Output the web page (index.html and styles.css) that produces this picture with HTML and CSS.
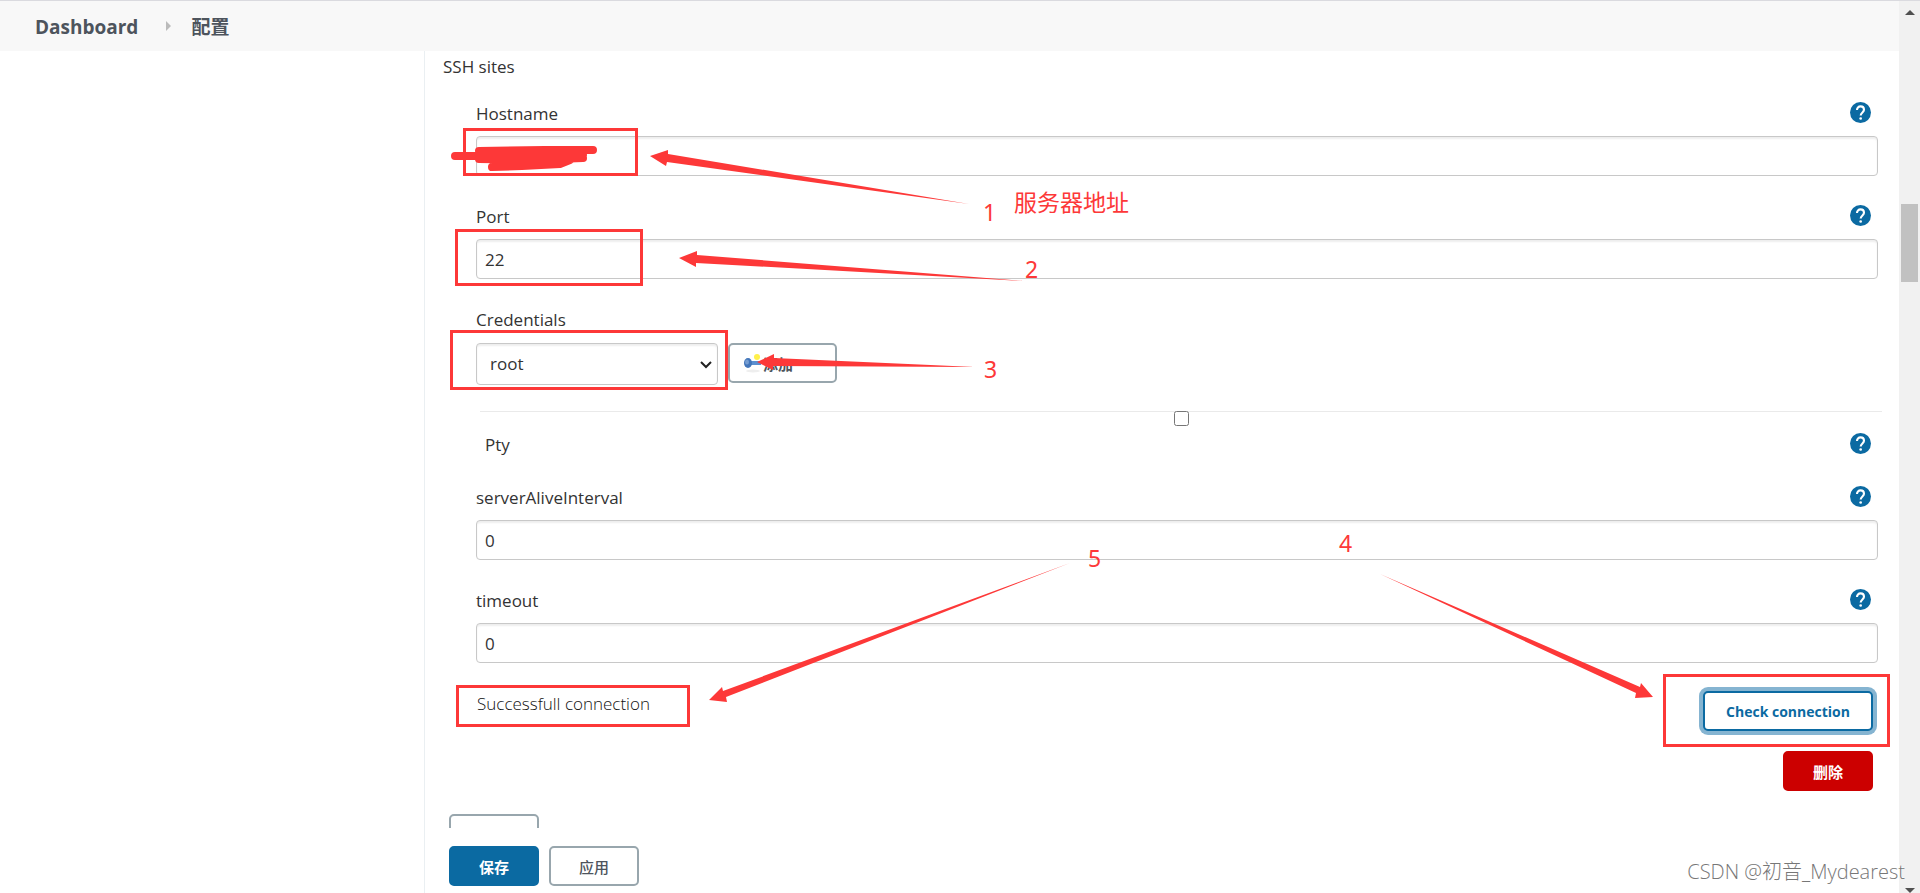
FILE: index.html
```html
<!DOCTYPE html>
<html lang="zh-CN">
<head>
  <meta charset="UTF-8">
  <title>配置 [Jenkins]</title>
  <link rel="stylesheet" href="styles.css">
</head>
<body>
  <svg class="symbols" aria-hidden="true">
    <symbol id="help" viewBox="0 0 24 24">
      <path fill="#0b6aa2" d="M12 0a12 12 0 1 0 0 24 12 12 0 0 0 0-24z"/>
      <path fill="none" stroke="#fff" stroke-width="2.4" d="M8 9.2c0-2.4 1.700-4.200 4-4.200s4 1.700 4 3.900c0 2.900-3.800 3.200-3.800 6.600"/>
      <circle cx="12.200" cy="18.800" r="1.500" fill="#fff"/>
    </symbol>
  </svg>

  <div class="window">
    <div class="page">
      <nav class="breadcrumbs">
        <a href="#">Dashboard</a>
        <span class="separator"></span>
        <a href="#">配置</a>
      </nav>

      <div class="main">
        <aside class="side-panel"></aside>
        <form class="config">
          <div class="config-body">
            <h2 class="section-title">SSH sites</h2>

            <div class="site">
              <div class="field">
                <div class="field-head">
                  <label for="hostname">Hostname</label>
                  <a class="help" href="#" aria-label="Help"><svg><use href="#help"/></svg></a>
                </div>
                <input class="text-input" id="hostname" type="text">
              </div>

              <div class="field">
                <div class="field-head">
                  <label for="port">Port</label>
                  <a class="help" href="#" aria-label="Help"><svg><use href="#help"/></svg></a>
                </div>
                <input class="text-input" id="port" type="text" value="22">
              </div>

              <div class="field">
                <div class="field-head">
                  <label for="credentials">Credentials</label>
                </div>
                <div class="credentials">
                  <div class="select">
                    <select id="credentials">
                      <option>root</option>
                    </select>
                    <svg viewBox="0 0 12 8"><path d="M1 1l5 5 5-5" fill="none" stroke="#222" stroke-width="2"/></svg>
                  </div>
                  <button class="button add" type="button">
                    <svg viewBox="0 0 20 20">
                      <ellipse cx="10" cy="18" rx="7" ry="1.500" fill="#eee"/>
                      <circle cx="14" cy="4" r="3" fill="#fff04a"/>
                      <path d="M5 8h13v4H5z" fill="#5b8fd0"/>
                      <ellipse cx="5" cy="10" rx="4" ry="5" fill="#4376ba"/>
                      <ellipse cx="4" cy="9" rx="2" ry="2.500" fill="#769ed2"/>
                    </svg>
                    添加
                  </button>
                </div>
              </div>

              <div class="pty">
                <input id="pty" type="checkbox">
                <div class="field-head">
                  <label for="pty">Pty</label>
                  <a class="help" href="#" aria-label="Help"><svg><use href="#help"/></svg></a>
                </div>
              </div>

              <div class="field">
                <div class="field-head">
                  <label for="interval">serverAliveInterval</label>
                  <a class="help" href="#" aria-label="Help"><svg><use href="#help"/></svg></a>
                </div>
                <input class="text-input" id="interval" type="text" value="0">
              </div>

              <div class="field">
                <div class="field-head">
                  <label for="timeout">timeout</label>
                  <a class="help" href="#" aria-label="Help"><svg><use href="#help"/></svg></a>
                </div>
                <input class="text-input" id="timeout" type="text" value="0">
              </div>

              <div class="validate">
                <span>Successfull connection</span>
                <button class="button check" type="button">Check connection</button>
              </div>
              <div class="remove">
                <button class="button danger" type="button">删除</button>
              </div>
            </div>

            <button class="button add-site" type="button" aria-label="新增"></button>
          </div>

          <div class="bottom-bar">
            <button class="button primary" type="submit">保存</button>
            <button class="button apply" type="button">应用</button>
          </div>
        </form>
      </div>
    </div>

    <div class="scrollbar">
      <svg viewBox="0 0 10 5"><path d="M0 5l5-5 5 5z"/></svg>
      <div class="track"><div class="thumb"></div></div>
      <svg viewBox="0 0 10 5"><path d="M0 0l5 5 5-5z"/></svg>
    </div>
  </div>

  <!-- hand-drawn notes on top of the form -->
  <svg class="notes">
    <g class="boxes">
      <rect x="464" y="129" width="172" height="45"/>
      <rect x="456" y="230" width="185" height="54"/>
      <rect x="451" y="331" width="275" height="57"/>
      <rect x="457" y="686" width="231" height="39"/>
      <rect x="1664" y="675" width="224" height="70"/>
    </g>
    <g class="scribble">
      <path d="M455 156H490M479 151L545 150L593 150M479 159L530 160L583 158M480 155H583M492 167L522 166L560 164L570 160"/>
    </g>
    <g class="arrows">
      <path d="M650 156L668 150V154L969 204L667 162L666 166z"/>
      <path d="M679 258L697 251V255L1024 281L696 263V267z"/>
      <path d="M757 362L774 354V358L975 367L773 366V370z"/>
      <path d="M1653 697L1641 683L1640 687L1380 574L1636 693L1635 698z"/>
      <path d="M709 700L722 687L723 691L1070 563L726 697L727 702z"/>
    </g>
    <g class="labels">
      <text x="983" y="221">1</text>
      <text x="1014" y="211">服务器地址</text>
      <text x="1025" y="278">2</text>
      <text x="984" y="378">3</text>
      <text x="1339" y="552">4</text>
      <text x="1088" y="567">5</text>
    </g>
  </svg>
  <div class="watermark">CSDN @初音_Mydearest</div>
</body>
</html>
```

FILE: styles.css
```css
:root {
  --text: #333;
  --blue: #0b6aa2;
  --red: #fd3838;
  --border: #c8c8c8;
}

* {
  box-sizing: border-box;
}

body {
  margin: 0;
  height: 100vh;
  overflow: hidden;
  position: relative;
  background: #fff;
  color: var(--text);
  font-family: "Open Sans", "Noto Sans CJK SC", sans-serif;
  font-size: 17px;
  line-height: 24px;
}

.symbols {
  display: none;
}

.window {
  display: flex;
  height: 100%;
  border-top: 1px solid #dadadf;
}

.page {
  flex: 1;
  display: flex;
  flex-direction: column;
  min-width: 0;
}

.breadcrumbs {
  display: flex;
  align-items: center;
  height: 50px;
  padding: 2px 0 0 35px;
  background: #f8f8f8;
  font-size: 19px;
  font-weight: 700;
}

.breadcrumbs a {
  color: #4d545d;
  text-decoration: none;
}

.separator {
  margin: 0 20px 2px 28px;
  border: 5px solid transparent;
  border-left-color: #bbb;
  border-right: 0;
}

.main {
  flex: 1;
  display: flex;
  min-height: 0;
}

.side-panel {
  width: 425px;
  border-right: 1px solid #eaeff2;
}

.config {
  flex: 1;
  display: flex;
  flex-direction: column;
  min-width: 0;
}

.config-body {
  flex: 1;
  min-height: 0;
  overflow: hidden;
  padding: 4px 21px 0 18px;
}

.section-title {
  margin: 0 0 23px;
  font-size: 17px;
  font-weight: 400;
}

.site {
  padding-left: 33px;
}

.field {
  margin-bottom: 29px;
}

.field-head {
  display: flex;
  justify-content: space-between;
  height: 24px;
  padding-right: 7px;
  font-weight: 500;
}

.field .field-head {
  margin-bottom: 10px;
}

.help,
.help svg {
  display: block;
  width: 21px;
  height: 21px;
}

.text-input,
select {
  display: block;
  width: 100%;
  height: 40px;
  padding: 0 8px;
  border: 1px solid var(--border);
  border-radius: 4px;
  background: #fff;
  box-shadow: inset 0 2px 2px rgba(0, 0, 0, 0.07);
  color: var(--text);
  font: inherit;
}

.credentials {
  display: flex;
  gap: 10px;
  padding-top: 1px;
}

.select {
  position: relative;
  width: 242px;
}

.select select {
  height: 42px;
  padding-left: 13px;
  appearance: none;
}

.select svg {
  position: absolute;
  right: 6px;
  top: 18px;
  width: 12px;
  height: 8px;
}

.button {
  min-width: 90px;
  height: 40px;
  padding: 0 22px;
  border: 2px solid #98a6ad;
  border-radius: 5px;
  background: #fff;
  color: #4d545d;
  font-family: inherit;
  font-size: 15px;
  font-weight: 700;
}

.add {
  display: flex;
  align-items: center;
  width: 109px;
  padding: 0 13px;
}

.add svg {
  width: 20px;
  height: 20px;
}

.pty {
  margin: -3px -4px 29px 4px;
  border-top: 1px solid #eaeaea;
}

.pty input {
  display: block;
  width: 15px;
  height: 15px;
  margin: -1px auto 7px;
}

.pty .field-head {
  padding: 0 11px 0 5px;
}

.validate {
  display: flex;
  justify-content: space-between;
  align-items: flex-start;
  margin-top: -1px;
  padding: 0 5px 0 1px;
  color: #111;
  font-weight: 300;
  line-height: 26px;
}

.check {
  width: 170px;
  border-color: var(--blue);
  box-shadow: 0 0 0 4px #85b4d1;
  color: var(--blue);
  font-size: 14px;
  padding: 0;
}

.remove {
  display: flex;
  justify-content: flex-end;
  margin: 20px 5px 23px 0;
}

.danger {
  border-color: #c00;
  background: #c00;
  color: #fff;
}

.add-site {
  display: block;
  margin-left: 6px;
}

.bottom-bar {
  display: flex;
  gap: 10px;
  height: 65px;
  padding: 18px 24px 0;
  background: #fff;
}

.primary {
  border-color: var(--blue);
  background: var(--blue);
  color: #fff;
}

.apply {
  font-weight: 500;
}

.scrollbar {
  display: flex;
  flex-direction: column;
  align-items: center;
  width: 21px;
  padding-top: 9px;
  background: #f1f1f1;
}

.scrollbar svg {
  width: 10px;
  height: 5px;
  fill: #505050;
}

.track {
  flex: 1;
  width: 17px;
  padding-top: 189px;
}

.thumb {
  height: 78px;
  background: #c1c1c1;
}

.notes {
  position: absolute;
  top: 0;
  left: 0;
  width: 100%;
  height: 100%;
  pointer-events: none;
}

.boxes {
  fill: none;
  stroke: var(--red);
  stroke-width: 3;
  shape-rendering: crispEdges;
}

.scribble {
  fill: none;
  stroke: var(--red);
  stroke-width: 8;
  stroke-linecap: round;
  stroke-linejoin: round;
}

.arrows {
  fill: var(--red);
}

.labels {
  fill: var(--red);
  font-family: "Noto Sans", "Noto Sans CJK SC", sans-serif;
  font-size: 23px;
}

.watermark {
  position: absolute;
  right: 15px;
  bottom: 9px;
  color: #777;
  font-size: 20px;
  font-weight: 300;
  text-shadow: -1px -1px 0 #fff;
}
```
